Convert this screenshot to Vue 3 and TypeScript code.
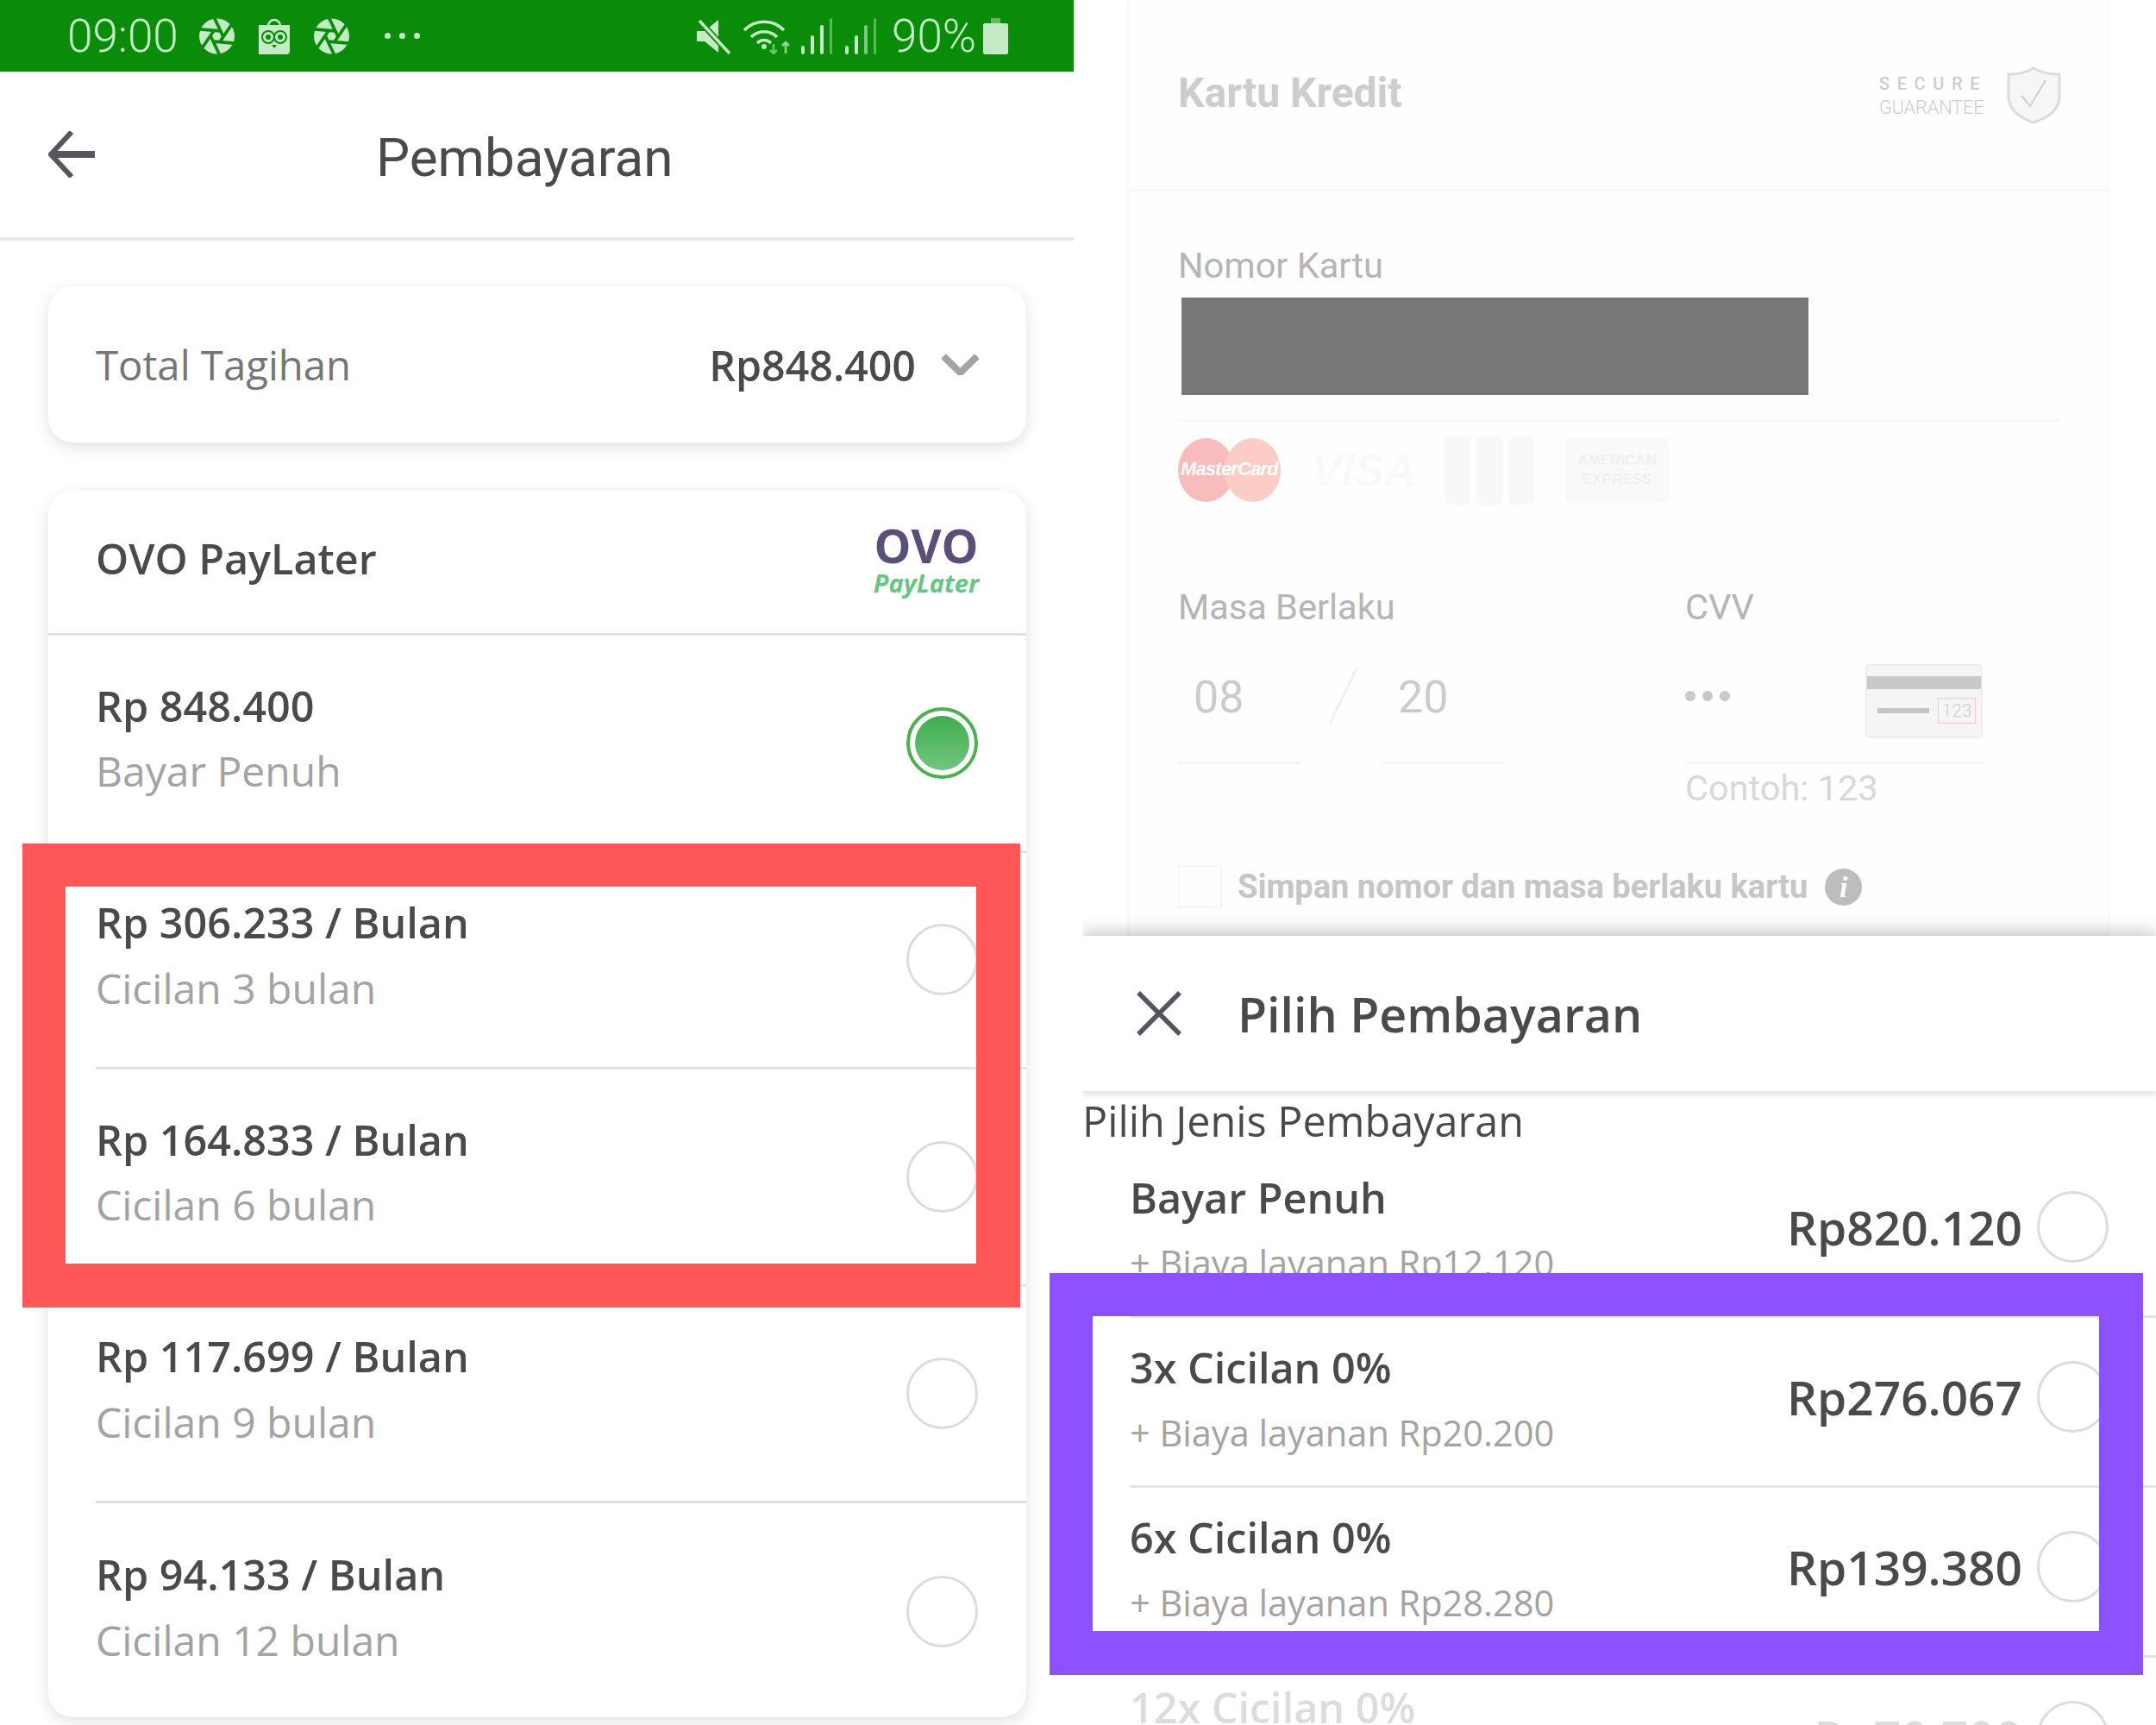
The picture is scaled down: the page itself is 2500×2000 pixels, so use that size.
<template>
  <div class="page">
    <section class="left">
      <div class="status">
        <span class="clock">09:00</span>
        <svg class="ap" viewBox="0 0 40 40"><circle cx="20" cy="20" r="20" fill="#c4ebc4" /><g v-for="a in blades" :key="a" :transform="`rotate(${a} 20 20)`"><line x1="27" y1="20" x2="17" y2="-1" stroke="#0a8c0a" stroke-width="3.6" /></g></svg>
        <svg class="bag" viewBox="0 0 38 42">
          <path d="M12 9a7 7 0 0 1 14 0" fill="none" stroke="#c4ebc4" stroke-width="2.5" />
          <path d="M1 8h36v30q0 4-4 4H1z" fill="#c4ebc4" />
          <circle cx="12" cy="22" r="7" fill="none" stroke="#0a8c0a" stroke-width="2" /><circle cx="26" cy="22" r="7" fill="none" stroke="#0a8c0a" stroke-width="2" />
          <circle cx="12" cy="22" r="3" fill="#0a8c0a" /><circle cx="26" cy="22" r="3" fill="#0a8c0a" />
          <path d="M16 31h6l-3 4z" fill="#0a8c0a" />
        </svg>
        <svg class="ap ap2" viewBox="0 0 40 40"><circle cx="20" cy="20" r="20" fill="#c4ebc4" /><g v-for="a in blades" :key="a" :transform="`rotate(${a} 20 20)`"><line x1="27" y1="20" x2="17" y2="-1" stroke="#0a8c0a" stroke-width="3.6" /></g></svg>
        <div class="dots"><i></i><i></i><i></i></div>
        <svg class="mute" viewBox="0 0 39 40">
          <path d="M0 14h9L25 1v38L9 26H0z" fill="#c4ebc4" />
          <line x1="2" y1="1" x2="37" y2="39" stroke="#0a8c0a" stroke-width="7" />
          <line x1="3" y1="2" x2="38" y2="40" stroke="#c4ebc4" stroke-width="3.5" />
        </svg>
        <svg class="wifi" viewBox="0 0 55 42" fill="none" stroke="#c4ebc4" stroke-width="3.4">
          <path d="M1 14a32 32 0 0 1 46 0" /><path d="M9 22a21 21 0 0 1 30 0" /><path d="M16 29a11 11 0 0 1 16 0" />
          <circle cx="24" cy="33" r="3" fill="#c4ebc4" stroke="none" />
          <path d="M35 30v11m-4-4 4 4 4-4" stroke="#6cc46c" stroke-width="2.6" /><path d="M49 41V28m-4 4 4-4 4 4" stroke="#8ed78e" stroke-width="2.6" />
        </svg>
        <svg v-for="c in ['sig1', 'sig2']" :key="c" :class="c" viewBox="0 0 36 42">
          <rect v-for="(b, i) in bars" :key="i" :x="i * 11" :y="42 - b" width="4" :height="b" rx="2" :fill="i === 3 ? '#5cb85c' : (c === 'sig2' && i === 2 ? '#7cc97c' : '#c4ebc4')" />
        </svg>
        <span class="batt-text">90%</span>
        <svg class="batt" viewBox="0 0 29 42"><path d="M9 0h11v6H9z" fill="#68b868" /><rect y="6" width="29" height="36" rx="2" fill="#c4ebc4" /></svg>
      </div>

      <header class="topbar">
        <svg class="back" viewBox="0 0 54 54" fill="none" stroke="#55555f">
          <path d="M27 1 3 27l24 26" stroke-width="6" /><path d="M4 27h50" stroke-width="8" />
        </svg>
        <h1>Pembayaran</h1>
      </header>

      <div class="card total">
        <span class="total-label">Total Tagihan</span>
        <span class="total-value">Rp848.400</span>
        <svg class="chev" viewBox="0 0 43 24" fill="none" stroke="#a3a3a3" stroke-width="8"><path d="M2 2l19.5 19L41 2" /></svg>
      </div>

      <div class="card plans">
        <div class="plans-head">
          <span>OVO PayLater</span>
          <div class="ovo"><b>OVO</b><em>PayLater</em></div>
        </div>
        <div v-for="p in plans" :key="p.sub" class="plan">
          <div class="plan-line">
            <div class="plan-text">
              <div class="plan-title">{{ p.title }}</div>
              <div class="plan-sub">{{ p.sub }}</div>
            </div>
            <div class="radio" :class="{ on: p.on }"></div>
          </div>
        </div>
      </div>
    </section>

    <section class="right">
      <div class="faded">
        <div class="faded-head">
          <span class="faded-title">Kartu Kredit</span>
          <div class="secure"><span>SECURE</span><small>GUARANTEE</small></div>
          <svg class="shield" viewBox="0 0 63 67" fill="none" stroke="#dcdcdc" stroke-width="3">
            <path d="M31 2q14 8 30 7v26q0 20-30 30Q2 55 2 35V9q15 1 29-7z" fill="#f6f6f6" />
            <path d="M17 34l10 12 18-30" stroke="#cfcfcf" stroke-width="2" />
          </svg>
        </div>
        <div class="faded-body">
          <div class="f-label">Nomor Kartu</div>
          <div class="redacted"></div>
          <div class="f-line"></div>
          <div class="brands">
            <div class="mc"><i></i><i></i><span>MasterCard</span></div>
            <span class="visa">VISA</span>
            <div class="jcb"><i></i><i></i><i></i></div>
            <div class="amex"><span>AMERICAN</span><span>EXPRESS</span></div>
          </div>
          <div class="f-cols">
            <div class="f-exp">
              <div class="f-label">Masa Berlaku</div>
              <div class="exp-row">
                <div class="f-field">08</div>
                <svg class="slash" viewBox="0 0 95 70" fill="none" stroke="#f0f0f0" stroke-width="3"><path d="M66 2 34 68" /></svg>
                <div class="f-field">20</div>
              </div>
            </div>
            <div class="f-cvv">
              <div class="f-label">CVV</div>
              <div class="cvv-row">
                <div class="pw"><i></i><i></i><i></i></div>
                <div class="cvv-card"><div class="stripe"></div><div class="cvv-low"><i></i><span>123</span></div></div>
              </div>
              <div class="hint">Contoh: 123</div>
            </div>
          </div>
          <div class="save">
            <div class="check"></div>
            <span>Simpan nomor dan masa berlaku kartu</span>
            <div class="info">i</div>
          </div>
        </div>
      </div>

      <div class="sheet">
        <div class="sheet-head">
          <svg class="close" viewBox="0 0 52 52" fill="none" stroke="#55555f" stroke-width="5.5"><path d="M2 2l48 48M50 2 2 50" /></svg>
          <span>Pilih Pembayaran</span>
        </div>
        <div class="sheet-label">Pilih Jenis Pembayaran</div>
        <div v-for="o in options" :key="o.title" class="opt" :class="{ dim: o.dim }">
          <div class="opt-text">
            <div class="opt-title">{{ o.title }}</div>
            <div class="opt-sub">{{ o.sub }}</div>
          </div>
          <div class="opt-price">{{ o.price }}</div>
          <div class="radio"></div>
        </div>
      </div>
    </section>

    <div class="frame red"></div>
    <div class="frame purple"></div>
  </div>
</template>

<script setup lang="ts">
interface Plan {
  title: string
  sub: string
  on?: boolean
}

interface Option {
  title: string
  sub: string
  price: string
  dim?: boolean
}

const blades = [0, 60, 120, 180, 240, 300]
const bars = [10, 22, 34, 42]

const plans: Plan[] = [
  { title: 'Rp 848.400', sub: 'Bayar Penuh', on: true },
  { title: 'Rp 306.233 / Bulan', sub: 'Cicilan 3 bulan' },
  { title: 'Rp 164.833 / Bulan', sub: 'Cicilan 6 bulan' },
  { title: 'Rp 117.699 / Bulan', sub: 'Cicilan 9 bulan' },
  { title: 'Rp 94.133 / Bulan', sub: 'Cicilan 12 bulan' },
]

const options: Option[] = [
  { title: 'Bayar Penuh', sub: '+ Biaya layanan Rp12.120', price: 'Rp820.120' },
  { title: '3x Cicilan 0%', sub: '+ Biaya layanan Rp20.200', price: 'Rp276.067' },
  { title: '6x Cicilan 0%', sub: '+ Biaya layanan Rp28.280', price: 'Rp139.380' },
  { title: '12x Cicilan 0%', sub: '+ Biaya layanan Rp36.360', price: 'Rp70.700', dim: true },
]
</script>

<style scoped>
.page { position: relative; width: 2500px; height: 2000px; overflow: hidden; display: flex; background: #fff; font-family: "Open Sans", "Noto Sans", sans-serif; color: #4a4a4a; }
.left { width: 1245px; flex: none; }
.right { flex: 1; min-width: 0; padding-left: 10px; display: flex; flex-direction: column; height: 2000px; }

.status { height: 83px; background: #0a8c0a; display: flex; align-items: center; color: #c4ebc4; font-family: Roboto, sans-serif; font-weight: 300; position: relative; }
.status svg { flex: none; height: 42px; }
.clock { font-size: 53px; margin-left: 78px; width: 153px; }
.ap { width: 41px; }
.bag { width: 38px; margin-left: 27px; }
.ap2 { margin-left: 27px; }
.dots { display: flex; gap: 10px; margin-left: 41px; margin-right: 321px; }
.dots i { width: 7px; height: 7px; border-radius: 50%; background: #c4ebc4; }
.mute { width: 39px; }
.wifi { width: 55px; margin-left: 15px; }
.sig1 { width: 36px; margin-left: 12px; }
.sig2 { width: 36px; margin-left: 15px; }
.batt-text { font-size: 53px; margin-left: 18px; width: 106px; }
.batt { width: 29px; }

.topbar { height: 192px; border-bottom: 4px solid #e6e6e6; display: flex; align-items: center; padding-left: 56px; box-sizing: content-box; }
.back { width: 54px; height: 54px; }
.topbar h1 { margin: 6px 0 0 326px; font: 400 62px Roboto, sans-serif; color: #4a4a4a; }

.card { background: #fff; border-radius: 28px; box-shadow: 0 5px 18px rgba(0, 0, 0, 0.13); margin: 0 55px 0 56px; }
.total { margin-top: 53px; height: 181px; display: flex; align-items: center; padding: 0 55px; font-size: 48px; }
.total-label { color: #757575; font-size: 47.3px; }
.total-value { margin-left: auto; font-weight: 600; font-size: 48.3px; }
.chev { width: 43px; height: 24px; margin-left: 30px; }

.plans { margin-top: 56px; height: 1422px; overflow: hidden; }
.plans-head { height: 168px; border-bottom: 3px solid #e2e2e2; display: flex; align-items: center; justify-content: space-between; padding: 0 56px 10px 55px; box-sizing: border-box; font-size: 48.5px; font-weight: 600; }
.ovo { display: flex; flex-direction: column; align-items: center; width: 120px; margin-top: 12px; }
.ovo b { font: 700 54px/40px "Open Sans", sans-serif; color: #5b4f78; }
.ovo em { font: italic 700 29px/36px "Open Sans", sans-serif; color: #66c584; margin-top: 6px; }
.plan { height: 251.5px; padding-left: 55px; box-sizing: border-box; }
.plan-line { height: 100%; display: flex; align-items: center; justify-content: space-between; padding-right: 56px; border-bottom: 3px solid #e2e2e2; box-sizing: border-box; }
.plan:last-child .plan-line { border-bottom: 0; }
.plan-text { margin-bottom: 10px; }
.plan-title { font-size: 48.5px; line-height: 76.5px; font-weight: 600; }
.plan-sub { font-size: 48px; line-height: 76.5px; color: #a3a3a3; }

.radio { flex: none; width: 83px; height: 83px; border: 3px solid #dcdcdc; border-radius: 50%; box-sizing: border-box; background: #fff; }
.radio.on { border: 4px solid #4caf50; position: relative; }
.radio.on::after { content: ""; position: absolute; inset: 6px; border-radius: 50%; background: linear-gradient(#41ac4e, #70c680); }

.faded { flex: none; height: 1105px; margin: -20px 54px 0 52px; border: 2px solid #f8f8f8; border-radius: 28px 28px 0 0; box-sizing: border-box; background: #fefefe; font-family: Roboto, sans-serif; color: #b5b5b5; overflow: hidden; }
.faded-head { height: 240px; border-bottom: 3px solid #f8f8f8; display: flex; align-items: center; padding: 14px 54px 0 57px; box-sizing: border-box; }
.faded-title { font-size: 48px; font-weight: 700; color: #cdcdcd; }
.secure { margin-left: auto; display: flex; flex-direction: column; width: 123px; color: #cdcdcd; line-height: 27px; margin-top: 6px; }
.secure span { font-size: 20px; font-weight: 500; letter-spacing: 8.6px; }
.secure small { font-size: 21.5px; font-weight: 300; }
.shield { width: 63px; height: 67px; margin: 6px 0 0 25px; }
.faded-body { padding: 61px 54px 0 57px; }
.f-label { font-size: 41.5px; line-height: 50px; }
.redacted { width: 727px; height: 113px; margin: 12px 0 0 4px; background: #777; }
.f-line { border-bottom: 3px solid #f8f8f8; margin-top: 28px; }
.brands { display: flex; align-items: center; height: 74px; margin-top: 19px; }
.mc { position: relative; width: 119px; height: 74px; }
.mc i { position: absolute; top: 0; width: 65px; height: 74px; border-radius: 50%; background: #fbcdc6; }
.mc i:first-child { left: 0; background: #f8bcbc; }
.mc i:nth-child(2) { right: 0; }
.mc span { position: absolute; left: 0; right: 0; top: 21px; font: italic 700 22px/30px "Liberation Sans", sans-serif; color: #fff; text-align: center; letter-spacing: -0.8px; white-space: nowrap; }
.visa { margin-left: 36px; width: 119px; font: italic 700 52px/74px "Liberation Sans", sans-serif; color: #f9f9f9; }
.jcb { display: flex; gap: 6px; margin-left: 35px; }
.jcb i { width: 31px; height: 80px; border-radius: 8px; background: #f8f8f8; }
.amex { margin-left: 35px; width: 120px; height: 74px; background: #f9f9f9; border-radius: 4px; display: flex; flex-direction: column; justify-content: center; align-items: center; font: 700 17px/22px "Liberation Sans", sans-serif; color: #f0f0f0; }
.f-cols { display: flex; margin-top: 97px; }
.f-exp { width: 588px; flex: none; }
.exp-row { display: flex; align-items: flex-start; height: 157px; padding-top: 42px; box-sizing: border-box; }
.f-field { width: 142px; height: 115px; border-bottom: 3px solid #f5f5f5; box-sizing: border-box; padding-left: 18px; font-size: 52px; line-height: 76px; color: #cbcbcb; }
.slash { width: 95px; height: 70px; }
.f-cvv { width: 345px; }
.cvv-row { height: 157px; border-bottom: 3px solid #f5f5f5; box-sizing: border-box; display: flex; justify-content: space-between; padding-top: 41px; }
.pw { display: flex; gap: 8px; margin-top: 31px; }
.pw i { width: 12px; height: 12px; border-radius: 50%; background: #c9c9c9; }
.cvv-card { width: 136px; height: 86px; background: #f5f5f5; border: 2px solid #ececec; border-radius: 5px; box-sizing: border-box; padding-top: 12px; }
.stripe { height: 15px; background: #c9c9c9; }
.cvv-low { display: flex; align-items: center; padding: 10px 6px 0 12px; justify-content: space-between; }
.cvv-low i { width: 60px; height: 6px; background: #c4c4c4; }
.cvv-low span { width: 44px; height: 30px; border: 1px solid #f7c9c0; box-sizing: border-box; font-size: 21px; line-height: 28px; text-align: center; color: #cfcfcf; font-weight: 300; }
.hint { font-size: 41.5px; line-height: 50px; margin-top: 3px; color: #d8d8d8; }
.save { display: flex; align-items: center; margin-top: 64px; font-size: 38px; font-weight: 700; color: #c6c6c6; }
.check { width: 51px; height: 50px; border: 2px solid #f6f6f6; box-sizing: border-box; margin-right: 18px; }
.info { width: 43px; height: 43px; margin-left: 20px; border-radius: 50%; background: #bdbdbd; color: #fff; font: italic 700 34px/43px "Liberation Serif", serif; text-align: center; }

.sheet { position: relative; flex: 1; background: #fff; box-shadow: 0 -6px 18px rgba(0, 0, 0, 0.2); clip-path: inset(-30px 0 0 0); }
.sheet-head { height: 180px; display: flex; align-items: center; padding-left: 62px; font-size: 55.5px; font-weight: 600; box-shadow: 0 4px 7px rgba(0, 0, 0, 0.12); }
.close { width: 52px; height: 52px; margin: 0 65px 0 1px; }
.sheet-label { font-size: 48.5px; line-height: 60px; margin-top: 4px; }
.opt { display: flex; align-items: center; height: 197px; margin: 2px 0 0 55px; padding: 0 55px 12px 0; border-bottom: 3px solid #e4e4e4; box-sizing: border-box; }
.opt + .opt { margin-top: 0; }
.opt-text { margin: 8px auto 0 0; }
.opt-title { font-size: 48.5px; line-height: 76px; font-weight: 600; }
.opt-sub { font-size: 41.5px; line-height: 76px; color: #a3a3a3; }
.opt-price { font-size: 55px; font-weight: 600; margin-right: 17px; }
.dim { color: #dcdcdc; }
.dim .opt-sub { color: #e4e4e4; }

.frame { position: absolute; box-sizing: border-box; }
.red { left: 26px; top: 978px; width: 1157px; height: 538px; border: solid #ff5757; border-width: 50px 51px 51px 50px; }
.purple { left: 1217px; top: 1476px; width: 1268px; height: 466px; border: solid #8c52ff; border-width: 50px 51px 51px 50px; }
</style>
